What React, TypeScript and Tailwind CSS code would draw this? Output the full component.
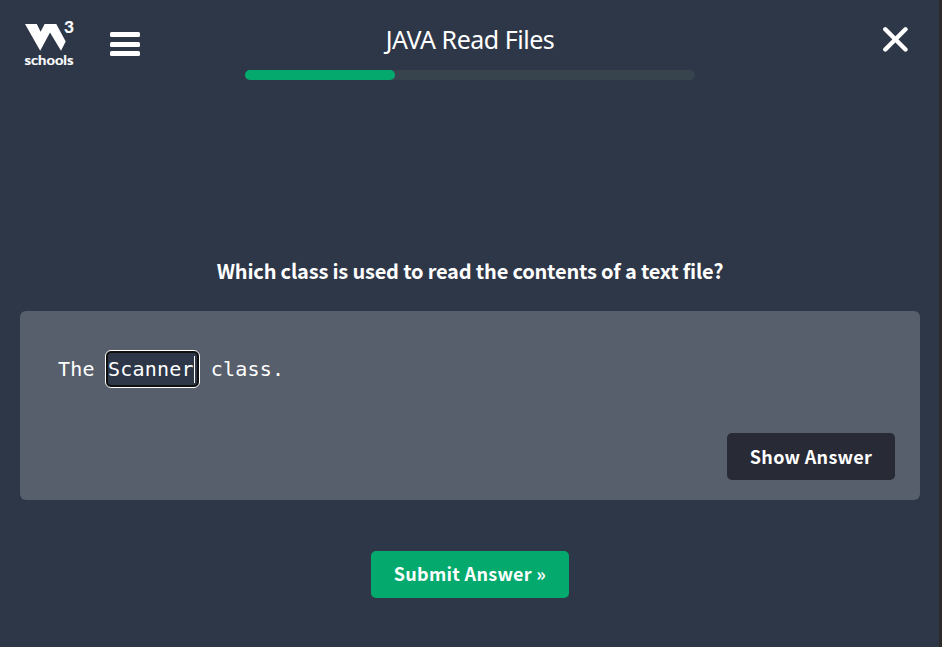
import React from "react";

const PROGRESS = 33.4;

function Logo() {
  return (
    <svg width="56" height="60" viewBox="0 -8 56 60" className="block shrink-0" fill="#fff">
      <path d="M2 6H13.8L17.6 13.8L21.6 6H33.3L42.7 23.5L38 32.7L27 14.5L17.2 32.7Z" />
      <text x="41" y="15" fontSize="17.5" className="font-['Lato',sans-serif] font-bold" stroke="#fff" strokeWidth="0.2" textLength="10" lengthAdjust="spacingAndGlyphs">3</text>
      <text x="1.5" y="46.7" fontSize="14" className="font-['Lato',sans-serif] font-bold" stroke="#fff" strokeWidth="0.2" textLength="49" lengthAdjust="spacingAndGlyphs">schools</text>
    </svg>
  );
}

function MenuButton() {
  return (
    <button aria-label="Menu" className="mt-[22px] ml-[31px] flex h-[24.4px] w-[30px] flex-col justify-between">
      <span className="h-[5px] w-full rounded-[1.5px] bg-white" />
      <span className="h-[5px] w-full rounded-[1.5px] bg-white" />
      <span className="h-[5px] w-full rounded-[1.5px] bg-white" />
    </button>
  );
}

export default function App() {
  return (
    <div className="flex h-[647px] w-[942px] flex-col overflow-hidden border-r-[3px] border-[#2b2b2b] bg-[#2e3748] font-['Noto_Sans_CJK_SC',sans-serif] text-white">
      <header className="flex h-[90px] items-start">
        <div className="flex w-[245px] pt-[10px] pl-[23.4px]">
          <Logo />
          <MenuButton />
        </div>
        <div className="w-[450px] pt-5">
          <h1 className="h-[50px] text-center font-['Noto_Sans',sans-serif] text-[25px] leading-[38px] tracking-[-0.48px] whitespace-nowrap">JAVA Read Files</h1>
          <div className="h-[10px] rounded-full bg-[#38444d]">
            <div className="h-full rounded-full bg-[#04aa6d]" style={{ width: `${PROGRESS}%` }} />
          </div>
        </div>
        <div className="flex flex-1 justify-end pt-[26px] pr-[31px]">
          <svg width="26" height="26" viewBox="0 0 26 26" stroke="#fff" strokeWidth="4.4" strokeLinecap="round">
            <path d="M3.3 3.3L23.5 23.5M23.5 3.3L3.3 23.5" />
          </svg>
        </div>
      </header>
      <main className="flex w-[940px] flex-col items-center px-5 pt-[161px]">
        <h2 className="h-[60px] text-[20px] leading-10 font-bold tracking-[-0.19px] whitespace-nowrap">Which class is used to read the contents of a text file?</h2>
        <section className="flex h-[189px] w-[900px] flex-col justify-between rounded-[6px] bg-[#585f6c] pt-[39px] pr-[25px] pb-5 pl-[38px]">
          <div className="flex h-[38px] items-center font-['DejaVu_Sans_Mono',monospace] text-[20px] leading-none tracking-[0.2px] whitespace-pre">
            <span>The</span>
            <div className="ml-[10.3px] flex h-[38px] w-[95px] items-center rounded-[6px] border border-white bg-[#101010] p-0.5">
              <div className="flex h-full w-full items-center rounded-[3px] bg-[#2e3748]">
                <span>Scanner</span>
                <span className="h-[27px] w-px shrink-0 bg-white" />
              </div>
            </div>
            <span className="ml-[10.8px]">class.</span>
          </div>
          <button className="h-[47px] w-[168px] self-end rounded-[5px] bg-[#282a35] pb-[1px] text-[18px] leading-none font-bold tracking-[0.28px] whitespace-nowrap">Show Answer</button>
        </section>
        <button className="mt-[51px] h-[47px] w-[198px] rounded-[5px] bg-[#04aa6d] pb-[3px] text-[18px] leading-none font-bold tracking-[0.28px] whitespace-nowrap">Submit Answer »</button>
      </main>
    </div>
  );
}
